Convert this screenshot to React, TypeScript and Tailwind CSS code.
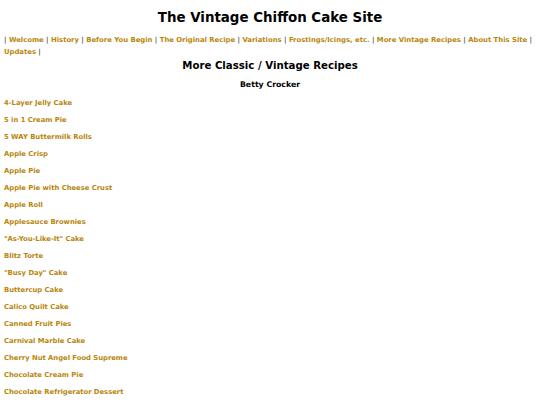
const nav = [
  "Welcome",
  "History",
  "Before You Begin",
  "The Original Recipe",
  "Variations",
  "Frostings/Icings, etc.",
  "More Vintage Recipes",
  "About This Site",
  "Updates",
];

const recipes = [
  "4-Layer Jelly Cake",
  "5 in 1 Cream Pie",
  "5 WAY Buttermilk Rolls",
  "Apple Crisp",
  "Apple Pie",
  "Apple Pie with Cheese Crust",
  "Apple Roll",
  "Applesauce Brownies",
  "\"As-You-Like-It\" Cake",
  "Blitz Torte",
  "\"Busy Day\" Cake",
  "Buttercup Cake",
  "Calico Quilt Cake",
  "Canned Fruit Pies",
  "Carnival Marble Cake",
  "Cherry Nut Angel Food Supreme",
  "Chocolate Cream Pie",
  "Chocolate Refrigerator Dessert",
];

export default function App() {
  return (
    <div className="h-screen overflow-hidden bg-white px-1 font-['DejaVu_Sans',Verdana,sans-serif] text-black">
      <h1 className="pt-[8px] text-center text-[13.4px] font-bold leading-[20px]">
        The Vintage Chiffon Cake Site
      </h1>

      <p className="mt-[6px] text-[6.85px] font-bold leading-[12px] text-[#555]">
        |{" "}
        {nav.map((item) => (
          <span key={item}>
            <a href="#" className="text-[#b8860b]">
              {item}
            </a>{" "}
            |{" "}
          </span>
        ))}
      </p>

      <h2 className="mt-[1px] text-center text-[10.2px] font-bold leading-[14px]">
        More Classic / Vintage Recipes
      </h2>
      <h3 className="mt-[7px] text-center text-[7.8px] font-bold leading-[10px]">Betty Crocker</h3>

      <ul className="mt-[7px] flex flex-col gap-[5px]">
        {recipes.map((r) => (
          <li key={r} className="text-[6.8px] font-bold leading-[12px]">
            <a href="#" className="text-[#b8860b]">
              {r}
            </a>
          </li>
        ))}
      </ul>
    </div>
  );
}
